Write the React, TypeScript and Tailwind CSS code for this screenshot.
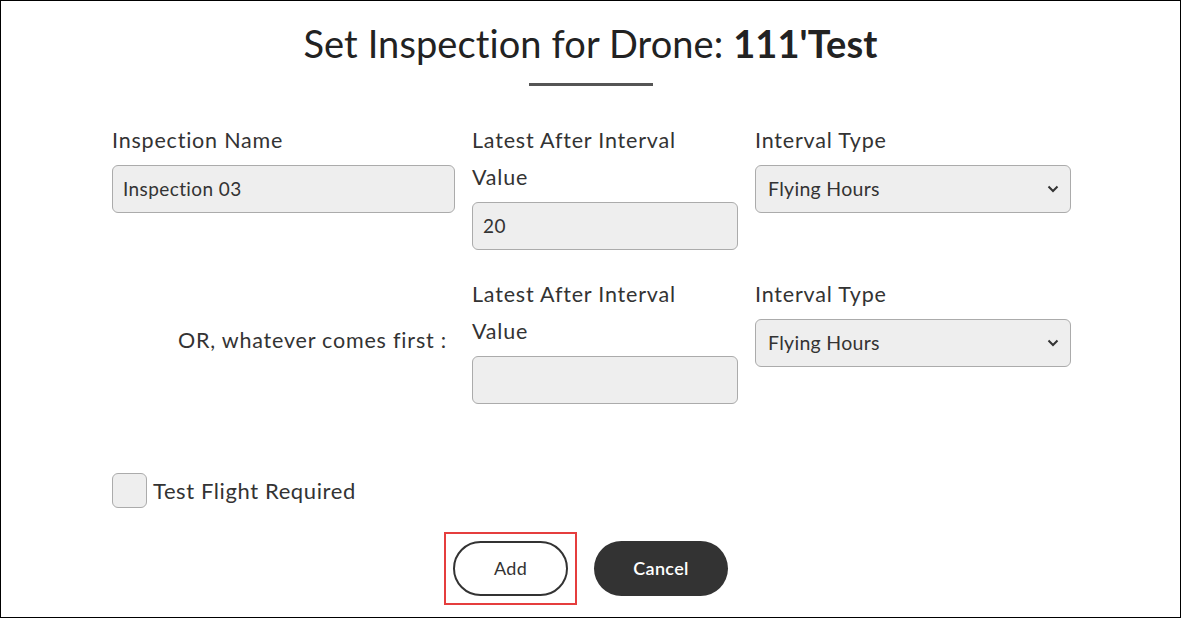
import React from "react"

const font = { fontFamily: "Lato, 'Noto Sans', sans-serif" }

function Label({ children }: { children: React.ReactNode }) {
    return (
        <div className="text-[21.5px] leading-[37px] tracking-[0.8px] text-[#333] mb-[6px]">
            {children}
        </div>
    )
}

function TextBox({ value, w }: { value?: string; w: string }) {
    return (
        <div
            className={`${w} h-[48px] rounded-[6px] border border-[#ababab] bg-[#eeeeee] px-[10px] flex items-center text-[19px] tracking-[0.4px] text-[#333]`}
        >
            {value}
        </div>
    )
}

function SelectBox({ value }: { value: string }) {
    return (
        <div className="w-[316px] h-[48px] rounded-[6px] border border-[#ababab] bg-[#eeeeee] pl-[12px] pr-[10px] flex items-center justify-between text-[19.5px] tracking-[0.3px] text-[#333]">
            <span>{value}</span>
            <svg width="12" height="8" viewBox="0 0 12 8" className="mr-[1px]">
                <path d="M1.5 1.5 L6 6 L10.5 1.5" fill="none" stroke="#333" strokeWidth="2" />
            </svg>
        </div>
    )
}

export default function App() {
    return (
        <div className="w-[1181px] h-[618px] border border-black bg-white" style={font}>
            <div className="flex flex-col items-center pt-[19px]">
                <h1 className="text-[38px] leading-[46px] text-[#222] tracking-[0.1px]">
                    Set Inspection for Drone: <span className="font-bold">111'Test</span>
                </h1>
                <div className="w-[124px] h-[3px] bg-[#555] mt-[17px]" />
            </div>

            <div className="pl-[111px] mt-[36px]">
                <div className="flex gap-[17px] items-start">
                    <div className="w-[343px]">
                        <Label>Inspection Name</Label>
                        <TextBox value="Inspection 03" w="w-[343px]" />
                    </div>
                    <div className="w-[266px]">
                        <Label>
                            Latest After Interval
                            <br />
                            Value
                        </Label>
                        <TextBox value="20" w="w-[266px]" />
                    </div>
                    <div className="w-[316px]">
                        <Label>Interval Type</Label>
                        <SelectBox value="Flying Hours" />
                    </div>
                </div>

                <div className="flex gap-[17px] items-start mt-[26px]">
                    <div className="w-[343px] self-center flex justify-end pr-[8px] text-[21.5px] tracking-[0.8px] text-[#333]">
                        OR, whatever comes first :
                    </div>
                    <div className="w-[266px]">
                        <Label>
                            Latest After Interval
                            <br />
                            Value
                        </Label>
                        <TextBox w="w-[266px]" />
                    </div>
                    <div className="w-[316px]">
                        <Label>Interval Type</Label>
                        <SelectBox value="Flying Hours" />
                    </div>
                </div>

                <div className="flex items-center gap-[6px] mt-[69px]">
                    <div className="w-[35px] h-[35px] rounded-[6px] border border-[#ababab] bg-[#eeeeee]" />
                    <span className="text-[22px] tracking-[0.6px] text-[#333]">Test Flight Required</span>
                </div>
            </div>

            <div className="flex justify-center items-center gap-[17px] mt-[24px] pr-[9px]">
                <div className="border-2 border-[#e53e3e] p-[7px]">
                    <button className="w-[115px] h-[55px] rounded-full border-2 border-[#333] bg-white text-[18px] tracking-[0.3px] text-[#333]">
                        Add
                    </button>
                </div>
                <button className="w-[134px] h-[55px] rounded-full bg-[#333] text-white text-[18px] tracking-[0.3px] font-semibold">
                    Cancel
                </button>
            </div>
        </div>
    )
}
